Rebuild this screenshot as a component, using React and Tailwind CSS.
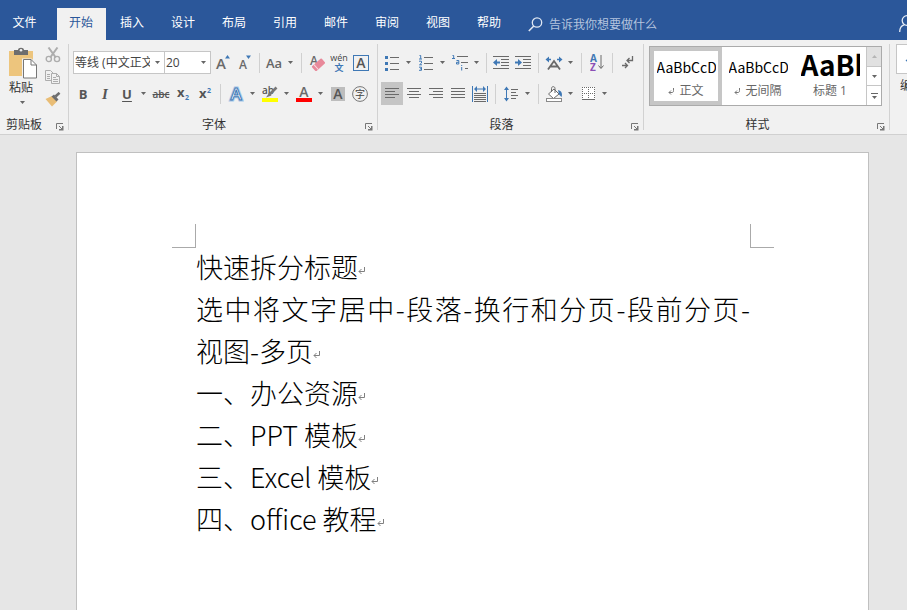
import React from "react";

const uiFont = "font-['Open_Sans','Noto_Sans_CJK_SC',sans-serif]";
const G = "#6a6a6a";
const B = "#3f78b5";

const tabs = ["插入", "设计", "布局", "引用", "邮件", "审阅", "视图", "帮助"];

function Tool({ label, active, children }) {
  return (
    <button
      type="button"
      aria-label={label}
      className={`flex h-[23px] w-[22px] shrink-0 items-center justify-center text-sm leading-4 text-[#555] ${
        active ? "bg-[#c5c5c5]" : ""
      }`}
    >
      {children}
    </button>
  );
}

function Triangle({ color = "#666" }) {
  return (
    <svg width="5" height="3" viewBox="0 0 5 3" aria-hidden="true">
      <path d="M0 0H5L2.5 3Z" fill={color} />
    </svg>
  );
}

function Caret({ label }) {
  return (
    <button type="button" aria-label={label} className="flex h-[23px] w-3 shrink-0 items-center pl-[3px]">
      <Triangle />
    </button>
  );
}

function Sep({ wide }) {
  return (
    <span className={`flex shrink-0 justify-center ${wide ? "w-[9px]" : "w-[7px]"}`}>
      <span className="h-5 w-px bg-[#d0d0d0]" />
    </span>
  );
}

function Icon({ w = 16, h = 16, children }) {
  return (
    <svg width={w} height={h} viewBox={`0 0 ${w} ${h}`} fill="none" className="shrink-0" aria-hidden="true">
      {children}
    </svg>
  );
}

function Launcher({ label }) {
  return (
    <button type="button" aria-label={label} className="absolute right-1 bottom-[2px]">
      <Icon w={8} h={8}>
        <path d="M0.5 6V0.5H7" stroke="#777" />
        <path d="M3 3L6 6" stroke="#777" />
        <path d="M7.5 3V7.5H3V6H6V3Z" fill="#777" />
      </Icon>
    </button>
  );
}

function Group({ title, children, className = "" }) {
  return (
    <section aria-label={title} className={`flex shrink-0 flex-col pt-[7px] pb-px ${className}`}>
      <div className="h-[62px]">{children}</div>
      <div className="relative mt-2 flex h-4 items-center justify-center text-xs leading-4 text-[#333]">
        <span>{title}</span>
        <Launcher label={`${title}设置`} />
      </div>
    </section>
  );
}

function Divider() {
  return <div className="my-1 w-px shrink-0 bg-[#d2d2d2]" />;
}

function Row({ children, className = "" }) {
  return <div className={`flex h-[31px] items-center ${className}`}>{children}</div>;
}

function Combo({ label, width, options }) {
  return (
    <label className={`relative block h-[23px] shrink-0 ${width}`}>
      <span className="sr-only">{label}</span>
      <select className="block h-[23px] w-full appearance-none overflow-hidden border border-[#c6c6c6] bg-white pr-[14px] pl-px text-xs leading-5 text-[#444]">
        {options.map((o) => (
          <option key={o}>{o}</option>
        ))}
      </select>
      <span className="pointer-events-none absolute inset-y-0 right-[5px] flex items-center">
        <Triangle />
      </span>
    </label>
  );
}

function Lines({ rows }) {
  return (
    <Icon w={14} h={11}>
      {rows.map(([a, b], i) => (
        <path key={i} d={`M${a} ${i * 3 + 0.5}H${b}`} stroke={G} />
      ))}
    </Icon>
  );
}

function Header() {
  return (
    <header className="flex h-10 items-end overflow-hidden bg-[#2b579a] text-xs text-white">
      <nav className="flex shrink-0 gap-[2px]">
        <button type="button" className="mr-[6px] h-8 w-[49px] pb-[2px]">文件</button>
        <button type="button" className="h-8 w-[49px] bg-[#f1f1f1] pr-px pb-[2px] text-[#2b579a]">开始</button>
        {tabs.map((t) => (
          <button key={t} type="button" className="h-8 w-[49px] pr-px pb-[2px]">
            {t}
          </button>
        ))}
      </nav>
      <label className="ml-[14px] flex h-8 shrink-0 items-center gap-[6px]">
        <Icon w={15} h={15}>
          <circle cx="9" cy="5.5" r="4.7" stroke="#dfe7f3" strokeWidth="1.3" />
          <path d="M5.8 9L0.8 14" stroke="#dfe7f3" strokeWidth="1.6" />
        </Icon>
        <span className="sr-only">搜索</span>
        <input
          type="text"
          placeholder="告诉我你想要做什么"
          className="h-8 w-40 bg-transparent text-xs text-white outline-none placeholder:text-[#b4c4de]"
        />
      </label>
      <button type="button" aria-label="登录" className="-mr-2 mb-2 ml-auto shrink-0">
        <Icon w={16} h={17}>
          <circle cx="8" cy="5.5" r="4.8" stroke="#e6ecf5" strokeWidth="1.3" />
          <path d="M0.7 17C0.7 12.5 3 10.3 5.5 9.6M15.3 17C15.3 12.5 13 10.3 10.5 9.6" stroke="#e6ecf5" strokeWidth="1.3" />
        </Icon>
      </button>
    </header>
  );
}

function Clipboard() {
  return (
    <Group title="剪贴板" className="w-[68px] [&>div:last-child]:pr-5">
      <div className="flex gap-[7px] pl-2">
        <button type="button" className="flex w-[30px] flex-col items-start text-xs leading-4 text-[#333]">
          <Icon w={30} h={33}>
            <path d="M1 4H25V29H1Z" fill="#edc57d" />
            <path d="M6 3H10C10 0 16 0 16 3H20V8H6Z" fill="#6e6e6e" />
            <circle cx="13" cy="3.2" r="1.3" fill="#f1f1f1" />
            <path d="M14 11.5H23.5L29 17V32H14Z" fill="#f1f1f1" />
            <path d="M15.5 12.5H23L28.5 18V31H15.5Z" fill="#fff" stroke="#777" />
            <path d="M23 12.5V18H28.5" stroke="#777" />
          </Icon>
          <span className="pl-px whitespace-nowrap">粘贴</span>
          <span className="mt-[5px] pl-3">
            <Triangle />
          </span>
        </button>
        <div className="flex flex-col items-center gap-[7px]">
          <button type="button" aria-label="剪切">
            <Icon w={16} h={16}>
              <path d="M3.5 0.5L10.8 10.5M12.5 0.5L5.2 10.5" stroke="#adadad" strokeWidth="2" />
              <circle cx="3.8" cy="12" r="2.6" stroke="#adadad" strokeWidth="1.4" />
              <circle cx="12" cy="12" r="2.6" stroke="#adadad" strokeWidth="1.4" />
            </Icon>
          </button>
          <button type="button" aria-label="复制">
            <Icon w={16} h={15}>
              <path d="M0.5 0.5H5.5L8.5 3.5V10.5H0.5Z" fill="#f1f1f1" stroke="#adadad" />
              <path d="M2 4.5H5M2 6.5H5M2 8.5H5" stroke="#adadad" />
              <path d="M6.5 3.5H11.5L14.5 6.5V13.5H6.5Z" fill="#f1f1f1" stroke="#adadad" />
              <path d="M11.5 3.5V6.5H14.5M8 7.5H11M8 9.5H13M8 11.5H13" stroke="#adadad" />
            </Icon>
          </button>
          <button type="button" aria-label="格式刷">
            <Icon w={16} h={15}>
              <path d="M0.5 7L7 4L12 9.5L7 14.5Z" fill="#e9bd76" />
              <path d="M6.5 4.5L9 2.5L13.5 7.5L11.5 9.5Z" fill="#6e6e6e" />
              <path d="M10.5 4.5L14.5 0.8" stroke="#6e6e6e" strokeWidth="2.6" />
            </Icon>
          </button>
        </div>
      </div>
    </Group>
  );
}

function FontGroup() {
  return (
    <Group title="字体" className="w-[308px] [&>div:last-child]:pr-[18px]">
      <Row className="pl-1">
        <div className="mr-px flex">
          <Combo label="字体" width="w-[92px]" options={["等线 (中文正文)"]} />
          <Combo label="字号" width="-ml-px w-[47px]" options={["20"]} />
        </div>
        <Tool label="增大字号">
          <Icon>
            <text x="1" y="14" fontSize="15" fontWeight="600" fill={G}>A</text>
            <path d="M10 3.5H15L12.5 0Z" fill={B} />
          </Icon>
        </Tool>
        <Tool label="减小字号">
          <Icon>
            <text x="2" y="14" fontSize="12" fontWeight="600" fill={G}>A</text>
            <path d="M9 0.5H14L11.5 4Z" fill={B} />
          </Icon>
        </Tool>
        <Sep />
        <Tool label="更改大小写">
          <span className="text-[13px] font-semibold text-[#666]">Aa</span>
        </Tool>
        <Caret label="大小写选项" />
        <Sep wide />
        <Tool label="清除格式">
          <Icon>
            <text x="1" y="10" fontSize="12" fontWeight="600" fill={G}>A</text>
            <g transform="rotate(-42 9 10)">
              <rect x="3" y="7" width="13" height="6.5" rx="1" fill="#e8899a" />
              <path d="M6.2 7V13.5" stroke="#f7dde2" />
            </g>
          </Icon>
        </Tool>
        <Tool label="拼音指南">
          <Icon w={18} h={18}>
            <text x="9" y="7" fontSize="9" textAnchor="middle" fill="#444">wén</text>
            <text x="9" y="17" fontSize="9" fontWeight="700" textAnchor="middle" fill={B}>文</text>
          </Icon>
        </Tool>
        <Tool label="字符边框">
          <Icon>
            <rect x="0.5" y="0.5" width="15" height="15" stroke={B} />
            <text x="8" y="13" fontSize="14" fontWeight="600" textAnchor="middle" fill="#555">A</text>
          </Icon>
        </Tool>
      </Row>
      <Row className="pl-[3px]">
        <Tool label="加粗"><b className="text-[13px]">B</b></Tool>
        <Tool label="倾斜"><i className="font-['Liberation_Serif',serif] text-[15px] font-bold">I</i></Tool>
        <Tool label="下划线"><span className="text-[13px] font-bold underline underline-offset-2">U</span></Tool>
        <Caret label="下划线选项" />
        <Tool label="删除线"><span className="text-[10px] font-semibold line-through">abc</span></Tool>
        <Tool label="下标">
          <Icon>
            <text x="2" y="11" fontSize="13" fontWeight="700" fill="#555">x</text>
            <text x="10" y="14" fontSize="7" fontWeight="700" fill={B}>2</text>
          </Icon>
        </Tool>
        <Tool label="上标">
          <Icon>
            <text x="2" y="12" fontSize="13" fontWeight="700" fill="#555">x</text>
            <text x="10" y="7" fontSize="7" fontWeight="700" fill={B}>2</text>
          </Icon>
        </Tool>
        <Sep wide />
        <Tool label="文本效果">
          <Icon>
            <text x="8" y="14" fontSize="17" fontWeight="600" textAnchor="middle" fill="#fff" stroke="#a9c8e8" strokeWidth="3">A</text>
            <text x="8" y="14" fontSize="17" fontWeight="600" textAnchor="middle" fill="#fff" stroke={B} strokeWidth="1">A</text>
          </Icon>
        </Tool>
        <Caret label="文本效果选项" />
        <Tool label="突出显示">
          <Icon>
            <text x="0" y="8" fontSize="10" fontWeight="600" fill="#555">ab</text>
            <path d="M14.5 1.5L7.5 8.5" stroke="#777" strokeWidth="2.6" />
            <path d="M7 7L9.5 9.5L4 11.5Z" fill="#777" />
            <rect y="12" width="16" height="4" fill="#ff0" />
          </Icon>
        </Tool>
        <Caret label="突出显示颜色" />
        <Tool label="字体颜色">
          <Icon>
            <text x="8" y="11" fontSize="14" fontWeight="600" textAnchor="middle" fill={G}>A</text>
            <rect y="12" width="16" height="4" fill="#f00" />
          </Icon>
        </Tool>
        <Caret label="字体颜色选项" />
        <Tool label="字符底纹">
          <Icon w={14} h={14}>
            <rect width="14" height="14" fill="#bdbdbd" />
            <text x="7" y="12" fontSize="14" fontWeight="600" textAnchor="middle" fill="#555">A</text>
          </Icon>
        </Tool>
        <Tool label="带圈字符">
          <Icon>
            <circle cx="8" cy="8" r="7.4" stroke="#777" />
            <text x="8" y="12" fontSize="10" textAnchor="middle" fill="#444">字</text>
          </Icon>
        </Tool>
      </Row>
    </Group>
  );
}

function Paragraph() {
  return (
    <Group title="段落" className="w-[265px] [&>div:last-child]:pr-[18px]">
      <Row className="pl-[3px]">
        <Tool label="项目符号">
          <Icon w={14} h={16}>
            <path d="M0 1H3V4H0ZM0 7H3V10H0ZM0 13H3V16H0Z" fill={B} />
            <path d="M5 2.5H14M5 8.5H14M5 14.5H14" stroke={G} />
          </Icon>
        </Tool>
        <Caret label="项目符号库" />
        <Tool label="编号">
          <Icon w={14} h={17}>
            <path d="M0.5 1.5H1.7V4.8M0 5H3M0 7.2H2.5V9L0.5 10.8H3M0 13.2H2.5V16.3H0M1 14.8H2.5" stroke={B} />
            <path d="M5 3.5H14M5 9.5H14M5 15.5H14" stroke={G} />
          </Icon>
        </Tool>
        <Caret label="编号库" />
        <Tool label="多级列表">
          <Icon w={17} h={17}>
            <path d="M0.5 1.5H1.7V4.5M0 4.5H3M4.5 6.5H6.8V10H4.5V8.3H6.8M9.7 11V12M9.7 13V16.5" stroke={B} />
            <path d="M5 2.5H16M9 8.5H16M13 14.5H16" stroke={G} />
          </Icon>
        </Tool>
        <Caret label="多级列表库" />
        <Sep />
        <Tool label="减少缩进量">
          <Icon w={16} h={13}>
            <path d="M0 0.5H16M8 3.5H16M8 6.5H16M8 9.5H16M0 12.5H16" stroke={G} />
            <path d="M7 6.5H2" stroke={B} strokeWidth="2" />
            <path d="M0 6.5L4 3V10Z" fill={B} />
          </Icon>
        </Tool>
        <Tool label="增加缩进量">
          <Icon w={16} h={13}>
            <path d="M0 0.5H16M8 3.5H16M8 6.5H16M8 9.5H16M0 12.5H16" stroke={G} />
            <path d="M0 6.5H5" stroke={B} strokeWidth="2" />
            <path d="M7 6.5L3 3V10Z" fill={B} />
          </Icon>
        </Tool>
        <Sep wide />
        <Tool label="中文版式">
          <Icon w={18} h={14}>
            <path d="M3 13.5L9 5L15 13.5M5.5 10.5H12.5" stroke={G} strokeWidth="1.8" />
            <path d="M2 3.5H6M12 3.5H16" stroke={B} strokeWidth="1.6" />
            <path d="M0.5 3.5L4 0.5V6.5ZM17.5 3.5L14 0.5V6.5Z" fill={B} />
          </Icon>
        </Tool>
        <Caret label="中文版式选项" />
        <Sep wide />
        <Tool label="排序">
          <Icon w={14} h={17}>
            <text x="0" y="8" fontSize="10" fontWeight="700" fill={B}>A</text>
            <text x="0" y="17" fontSize="10" fontWeight="700" fill="#8a4fb5">Z</text>
            <path d="M11 1V14M8.5 11.5L11 14.5L13.5 11.5" stroke={G} />
          </Icon>
        </Tool>
        <Sep wide />
        <Tool label="显示编辑标记">
          <Icon w={12} h={13}>
            <path d="M10.5 0V4.5H5M7.5 2L5 4.5L7.5 7M0 9.5H5M3 7L5.5 9.5L3 12" stroke={G} strokeWidth="1.3" />
          </Icon>
        </Tool>
      </Row>
      <Row className="pl-[3px]">
        <Tool label="左对齐" active><Lines rows={[[0, 14], [0, 10], [0, 14], [0, 10]]} /></Tool>
        <Tool label="居中"><Lines rows={[[0, 14], [2, 12], [0, 14], [2, 12]]} /></Tool>
        <Tool label="右对齐"><Lines rows={[[0, 14], [4, 14], [0, 14], [4, 14]]} /></Tool>
        <Tool label="两端对齐"><Lines rows={[[0, 14], [0, 14], [0, 14], [0, 14]]} /></Tool>
        <Tool label="分散对齐">
          <Icon w={16} h={16}>
            <path d="M0.5 0V16M15.5 0V16M3 3H13" stroke={B} />
            <path d="M2 3L5 0V6ZM14 3L11 0V6Z" fill={B} />
            <path d="M2 7.5H14M2 9.5H14M2 11.5H14M2 13.5H14M2 15.5H14" stroke={G} />
          </Icon>
        </Tool>
        <Sep wide />
        <Tool label="行和段落间距">
          <Icon w={14} h={16}>
            <path d="M2.5 2V14" stroke={B} />
            <path d="M0 4L2.5 0.5L5 4ZM0 12L2.5 15.5L5 12Z" fill={B} />
            <path d="M7 3.5H14M7 6.5H12M7 9.5H14M7 12.5H12" stroke={G} />
          </Icon>
        </Tool>
        <Caret label="间距选项" />
        <Sep wide />
        <Tool label="底纹">
          <Icon w={17} h={16}>
            <path d="M2.5 8L8 3L13 8L7.5 12.5Z" fill="#fff" stroke={G} />
            <path d="M5.5 6V2.5C5.5 0 9 0 9 2.5V7" stroke={G} />
            <path d="M12 4C16 5 16.5 8 15.5 11L13 8.5Z" fill={B} />
            <rect x="0.5" y="12.5" width="15" height="3" fill="#fff" stroke="#8a8a8a" />
          </Icon>
        </Tool>
        <Caret label="底纹颜色" />
        <Tool label="边框">
          <Icon w={13} h={13}>
            <rect width="13" height="13" fill="#fff" />
            <path d="M0 0.5H13M0.5 0V12M12.5 0V12M6.5 0V12M0 6.5H13" stroke={G} strokeDasharray="1 1" />
            <path d="M0 12.5H13" stroke={G} />
          </Icon>
        </Tool>
        <Caret label="边框选项" />
      </Row>
    </Group>
  );
}

const styles = [
  { name: "正文", mark: true, selected: true },
  { name: "无间隔", mark: true },
  { name: "标题 1", heading: true },
];

function Styles() {
  return (
    <Group title="样式" className="w-[245px] [&>div:last-child]:pr-[18px]">
      <div className="-mt-px mr-[7px] ml-[5px] flex h-[60px] border border-[#ababab] bg-white">
        {styles.map((s) => (
          <button
            key={s.name}
            type="button"
            className={`flex w-[72px] shrink-0 flex-col items-center overflow-hidden border-4 ${
              s.selected ? "border-[#c6c6c6]" : "border-transparent"
            }`}
          >
            <span
              className={`block h-8 w-[59px] overflow-hidden text-left font-['Noto_Sans_CJK_SC',sans-serif] whitespace-nowrap text-black ${
                s.heading ? "text-[28px] leading-[26px] font-bold" : "text-sm leading-8"
              }`}
            >
              {s.heading ? "AaBb" : "AaBbCcDd"}
            </span>
            <span className="flex items-center gap-1 text-xs leading-4 text-[#666]">
              {s.mark && <ReturnMark />}
              {s.name}
            </span>
          </button>
        ))}
        <div className="ml-auto flex w-[15px] flex-col divide-y divide-[#c6c6c6] border-l border-[#c6c6c6]">
          <button type="button" aria-label="上一行" className="flex flex-1 items-center justify-center bg-[#e1e1e1]">
            <span className="flex rotate-180">
              <Triangle color="#b5b5b5" />
            </span>
          </button>
          <button type="button" aria-label="下一行" className="flex flex-1 items-center justify-center">
            <Triangle />
          </button>
          <button type="button" aria-label="其他" className="flex flex-1 flex-col items-center justify-center gap-[2px]">
            <span className="h-px w-[7px] bg-[#666]" />
            <Triangle />
          </button>
        </div>
      </div>
    </Group>
  );
}

function ReturnMark() {
  return (
    <svg width="7" height="7" viewBox="0 0 7 7" fill="none" className="inline-block" aria-hidden="true">
      <path d="M5.5 0V2.5C5.5 4 5 4.5 4 4.5H1M3 2.5L1 4.5L3 6.5" stroke="#777" />
    </svg>
  );
}

function Editing() {
  return (
    <div className="shrink-0 pt-1 pl-[6px] text-xs text-[#333]">
      <button type="button" className="flex flex-col items-center">
        <span className="flex h-[30px] w-8 items-center border border-[#c6c6c6] bg-white pl-2">
          <Icon w={14} h={14}>
            <path d="M0.5 8.5L4 5.5V11.5Z" fill={B} />
          </Icon>
        </span>
        <span className="mt-1 leading-4">编辑</span>
      </button>
    </div>
  );
}

function Line({ children, spread }) {
  return (
    <span className={`block ${spread ? "[text-align-last:justify]" : ""}`}>{children}</span>
  );
}

function ParaEnd() {
  return (
    <svg width="8" height="11" viewBox="0 0 8 11" fill="none" className="inline-block align-baseline" aria-hidden="true">
      <path d="M6.5 0V4.5H1M3.5 2L1 4.5L3.5 7" stroke="#808080" />
    </svg>
  );
}

const items = ["一、办公资源", "二、PPT 模板", "三、Excel 模板", "四、office 教程"];

export default function App() {
  return (
    <div className={`flex min-h-screen flex-col overflow-hidden bg-[#e6e6e6] ${uiFont}`}>
      <Header />
      <div className="flex overflow-hidden border-b border-[#d0d0d0] bg-[#f1f1f1]">
        <Clipboard />
        <Divider />
        <FontGroup />
        <Divider />
        <Paragraph />
        <Divider />
        <Styles />
        <Divider />
        <Editing />
      </div>
      <main className="mt-[17px] mr-[38px] ml-[76px] flex-1 border border-b-0 border-[#c0c0c0] bg-white pt-[71px] pr-[94px] pl-[95px]">
        <div className="flex justify-between">
          <span className="h-6 w-6 border-r border-b border-[#aaa]" />
          <span className="h-6 w-6 border-b border-l border-[#aaa]" />
        </div>
        <article className="-mt-[2px] px-6 font-['Noto_Sans_CJK_SC',sans-serif] text-[27px] leading-[42px] font-light text-black">
          <p>快速拆分标题<ParaEnd /></p>
          <p>
            <Line spread>选中将文字居中-段落-换行和分页-段前分页-</Line>
            <Line>视图-多页<ParaEnd /></Line>
          </p>
          {items.map((t) => (
            <p key={t}>{t}<ParaEnd /></p>
          ))}
        </article>
      </main>
    </div>
  );
}
